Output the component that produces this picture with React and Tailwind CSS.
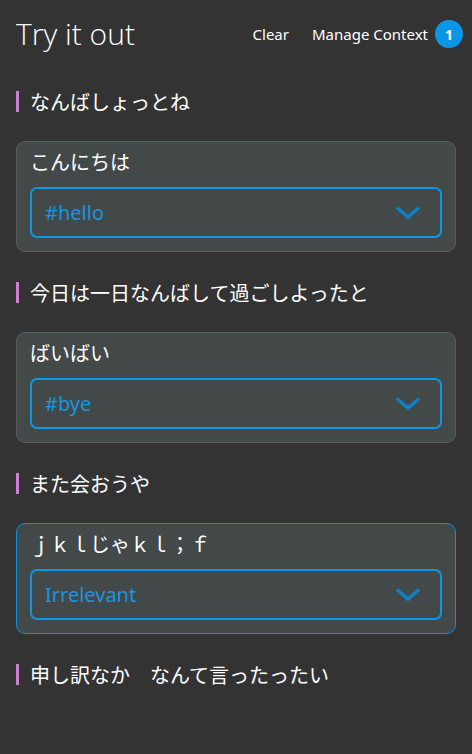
import React from "react";

const Chevron = () => (
  <svg width="26" height="15" viewBox="0 0 26 15" fill="none">
    <polyline points="2,2.5 13,12 24,2.5" stroke="#0e80c4" strokeWidth="3.6" strokeLinecap="butt" strokeLinejoin="miter" />
  </svg>
);

const Label = ({ children, className = "" }) => (
  <div className={"flex items-center h-[21px] " + className}>
    <div className="w-[3px] h-[21px] bg-[#cc80d4]" />
    <div className="ml-[11px] text-[20px] leading-[28px] text-white whitespace-pre" style={{ fontFamily: '"Noto Sans CJK JP", "Noto Sans", sans-serif' }}>
      {children}
    </div>
  </div>
);

const Card = ({ title, value, focused, className = "" }) => (
  <div
    className={
      "h-[111px] rounded-[9px] border bg-[#434949] px-[13px] pt-[6px] " +
      (focused ? "border-[#0b8fd8] " : "border-[#575c5c] ") +
      className
    }
  >
    <div className="h-[28px] leading-[28px] text-[20px] text-white whitespace-pre" style={{ fontFamily: '"Noto Sans CJK JP", "Noto Sans", sans-serif' }}>
      {title}
    </div>
    <div className="mt-[11px] h-[51px] rounded-[7px] border-2 border-[#0b97e6] flex items-center justify-between pl-[13px] pr-[19px]">
      <span className="text-[20px] text-[#1895e0]" style={{ fontFamily: '"Noto Sans", sans-serif' }}>{value}</span>
      <Chevron />
    </div>
  </div>
);

export default function App() {
  return (
    <div className="w-[472px] min-h-[754px] bg-[#333333] px-4" style={{ fontFamily: '"Noto Sans", sans-serif' }}>
      <div className="flex items-center justify-between h-[40px] pt-[14px] box-content -mr-[7px]">
        <div className="text-[30px] font-light text-white leading-none" style={{ fontFamily: '"Open Sans", sans-serif' }}>
          Try it out
        </div>
        <div className="flex items-center text-[15px] text-white">
          <span>Clear</span>
          <span className="ml-[23px]">Manage Context</span>
          <span className="ml-[7px] w-[28px] h-[28px] rounded-full bg-[#0b97e6] flex items-center justify-center text-[14px] font-bold">1</span>
        </div>
      </div>
      <Label className="mt-[37px]">なんばしょっとね</Label>
      <Card className="mt-[29px]" title="こんにちは" value="#hello" />
      <Label className="mt-[30px]">今日は一日なんばして過ごしよったと</Label>
      <Card className="mt-[29px]" title="ばいばい" value="#bye" />
      <Label className="mt-[30px]">また会おうや</Label>
      <Card className="mt-[29px]" title="ｊｋｌじゃｋｌ；ｆ" value="Irrelevant" focused />
      <Label className="mt-[30px]">申し訳なか　なんて言ったったい</Label>
    </div>
  );
}
